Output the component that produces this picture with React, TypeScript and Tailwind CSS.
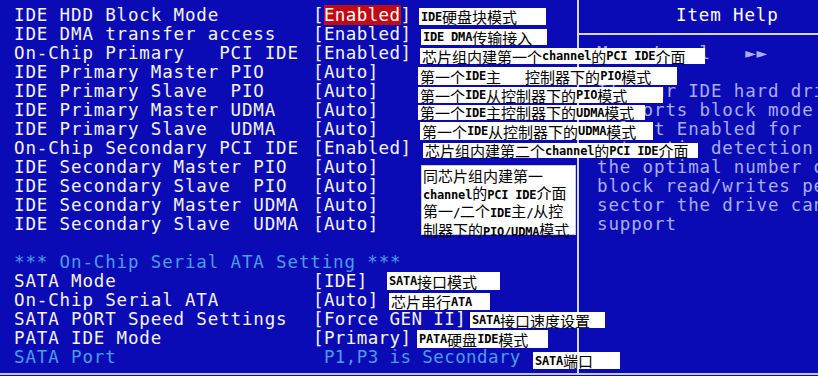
import React from "react";

function Ann({ t }: { t: string }) {
  const parts = t.split(/([\x20-\x7e]+)/).filter((p) => p.length > 0);
  return (
    <>
      {parts.map((p, i) =>
        /^[\x20-\x7e]+$/.test(p) ? (
          <span
            key={i}
            className="font-['DejaVu_Sans_Mono',monospace] font-bold text-[12px] tracking-[-0.2px] whitespace-pre"
          >
            {p}
          </span>
        ) : (
          <span key={i}>{p}</span>
        )
      )}
    </>
  );
}

type Row = { label: string; value?: React.ReactNode; blue?: boolean };

const rows: Row[] = [
  {
    label: "IDE HDD Block Mode",
    value: (
      <>
        [<span className="bg-[#c20a12] text-white">Enabled</span>]
      </>
    ),
  },
  { label: "IDE DMA transfer access", value: "[Enabled]" },
  { label: "On-Chip Primary   PCI IDE", value: "[Enabled]" },
  { label: "IDE Primary Master PIO", value: "[Auto]" },
  { label: "IDE Primary Slave  PIO", value: "[Auto]" },
  { label: "IDE Primary Master UDMA", value: "[Auto]" },
  { label: "IDE Primary Slave  UDMA", value: "[Auto]" },
  { label: "On-Chip Secondary PCI IDE", value: "[Enabled]" },
  { label: "IDE Secondary Master PIO", value: "[Auto]" },
  { label: "IDE Secondary Slave  PIO", value: "[Auto]" },
  { label: "IDE Secondary Master UDMA", value: "[Auto]" },
  { label: "IDE Secondary Slave  UDMA", value: "[Auto]" },
  { label: "" },
  { label: "*** On-Chip Serial ATA Setting ***", blue: true },
  { label: "SATA Mode", value: "[IDE]" },
  { label: "On-Chip Serial ATA", value: "[Auto]" },
  { label: "SATA PORT Speed Settings", value: "[Force GEN II]" },
  { label: "PATA IDE Mode", value: "[Primary]" },
  { label: "SATA Port", value: " P1,P3 is Secondary", blue: true },
];

const help = [
  "Menu Level   \u25BA\u25BA",
  "",
  "If your IDE hard drive",
  "supports block mode",
  "select Enabled for",
  "automatic detection of",
  "the optimal number of",
  "block read/writes per",
  "sector the drive can",
  "support",
];

const box =
  "absolute bg-white text-black flex items-center pl-[2px] text-[15px] leading-none whitespace-pre font-['Noto_Sans_CJK_SC',sans-serif] z-10";

export default function App() {
  return (
    <div className="relative w-[818px] h-[376px] overflow-hidden bg-[#0b0bb5] font-['DejaVu_Sans_Mono',monospace] text-[17.5px]">
      <div className="flex h-[373px]">
        <div className="w-[577px] shrink-0 pt-[6px] pl-[14px] text-[#f4f4f0]">
          {rows.map((r, i) => (
            <div
              key={i}
              className={
                r.blue
                  ? "flex h-[19px] leading-[19px] whitespace-pre text-[#4b9cea]"
                  : "flex h-[19px] leading-[19px] whitespace-pre"
              }
            >
              <span className="w-[299px] shrink-0 tracking-[0.86px]">{r.label}</span>
              {r.value !== undefined && (
                <span className="tracking-[0.4px]">{r.value}</span>
              )}
            </div>
          ))}
        </div>
        <div className="w-[2px] shrink-0 bg-[#d6d6ea]" />
        <div className="flex-1 min-w-0 flex flex-col">
          <div className="h-[33px] pt-[6px] pl-[97px] leading-[19px] text-white tracking-[0.86px] whitespace-pre">
            Item Help
          </div>
          <div className="h-[2px] bg-[#d6d6ea]" />
          <div className="pt-[9px] pl-[18px] text-[#a8aef0] tracking-[0.86px]">
            {help.map((l, i) => (
              <div key={i} className="h-[19px] leading-[19px] whitespace-pre">
                {l}
              </div>
            ))}
          </div>
        </div>
      </div>
      <div className="h-[2px] bg-[#c4c4dc]" />

      <div className={box + " left-[419px] top-[8px] w-[127px] h-[17px]"}>
        <Ann t="IDE硬盘块模式" />
      </div>
      <div className={box + " left-[421px] top-[29px] w-[126px] h-[16px]"}>
        <Ann t="IDE DMA传输接入" />
      </div>
      <div className={box + " left-[420px] top-[48px] w-[285px] h-[16px]"}>
        <Ann t="芯片组内建第一个channel的PCI IDE介面" />
      </div>
      <div className={box + " left-[418px] top-[67px] w-[259px] h-[18px]"}>
        <Ann t="第一个IDE主" />
        <span className="inline-block w-[24px]" />
        <Ann t="控制器下的PIO模式" />
      </div>
      <div className={box + " left-[418px] top-[87px] w-[245px] h-[16px]"}>
        <Ann t="第一个IDE从控制器下的PIO模式" />
      </div>
      <div className={box + " left-[418px] top-[105px] w-[227px] h-[15px]"}>
        <Ann t="第一个IDE主控制器下的UDMA模式" />
      </div>
      <div className={box + " left-[420px] top-[122px] w-[233px] h-[18px]"}>
        <Ann t="第一个IDE从控制器下的UDMA模式" />
      </div>
      <div className={box + " left-[423px] top-[143px] w-[275px] h-[15px]"}>
        <Ann t="芯片组内建第二个channel的PCI IDE介面" />
      </div>
      <div className="absolute left-[421px] top-[165px] w-[155px] h-[70px] bg-white text-black border border-[#c8c8d8] pl-[1px] pt-[2px] text-[15px] leading-[16.5px] whitespace-pre font-['Noto_Sans_CJK_SC',sans-serif] z-10">
        <div>
          <Ann t="同芯片组内建第一" />
        </div>
        <div>
          <Ann t="channel的PCI IDE介面" />
        </div>
        <div>
          <Ann t="第一/二个IDE主/从控" />
        </div>
        <div>
          <Ann t="制器下的PIO/UDMA模式" />
        </div>
      </div>
      <div className={box + " left-[387px] top-[272px] w-[113px] h-[18px]"}>
        <Ann t="SATA接口模式" />
      </div>
      <div className={box + " left-[389px] top-[293px] w-[101px] h-[17px]"}>
        <Ann t="芯片串行ATA" />
      </div>
      <div className={box + " left-[470px] top-[312px] w-[135px] h-[16px]"}>
        <Ann t="SATA接口速度设置" />
      </div>
      <div className={box + " left-[417px] top-[330px] w-[131px] h-[18px]"}>
        <Ann t="PATA硬盘IDE模式" />
      </div>
      <div className={box + " left-[533px] top-[352px] w-[87px] h-[17px]"}>
        <Ann t="SATA端口" />
      </div>
    </div>
  );
}
